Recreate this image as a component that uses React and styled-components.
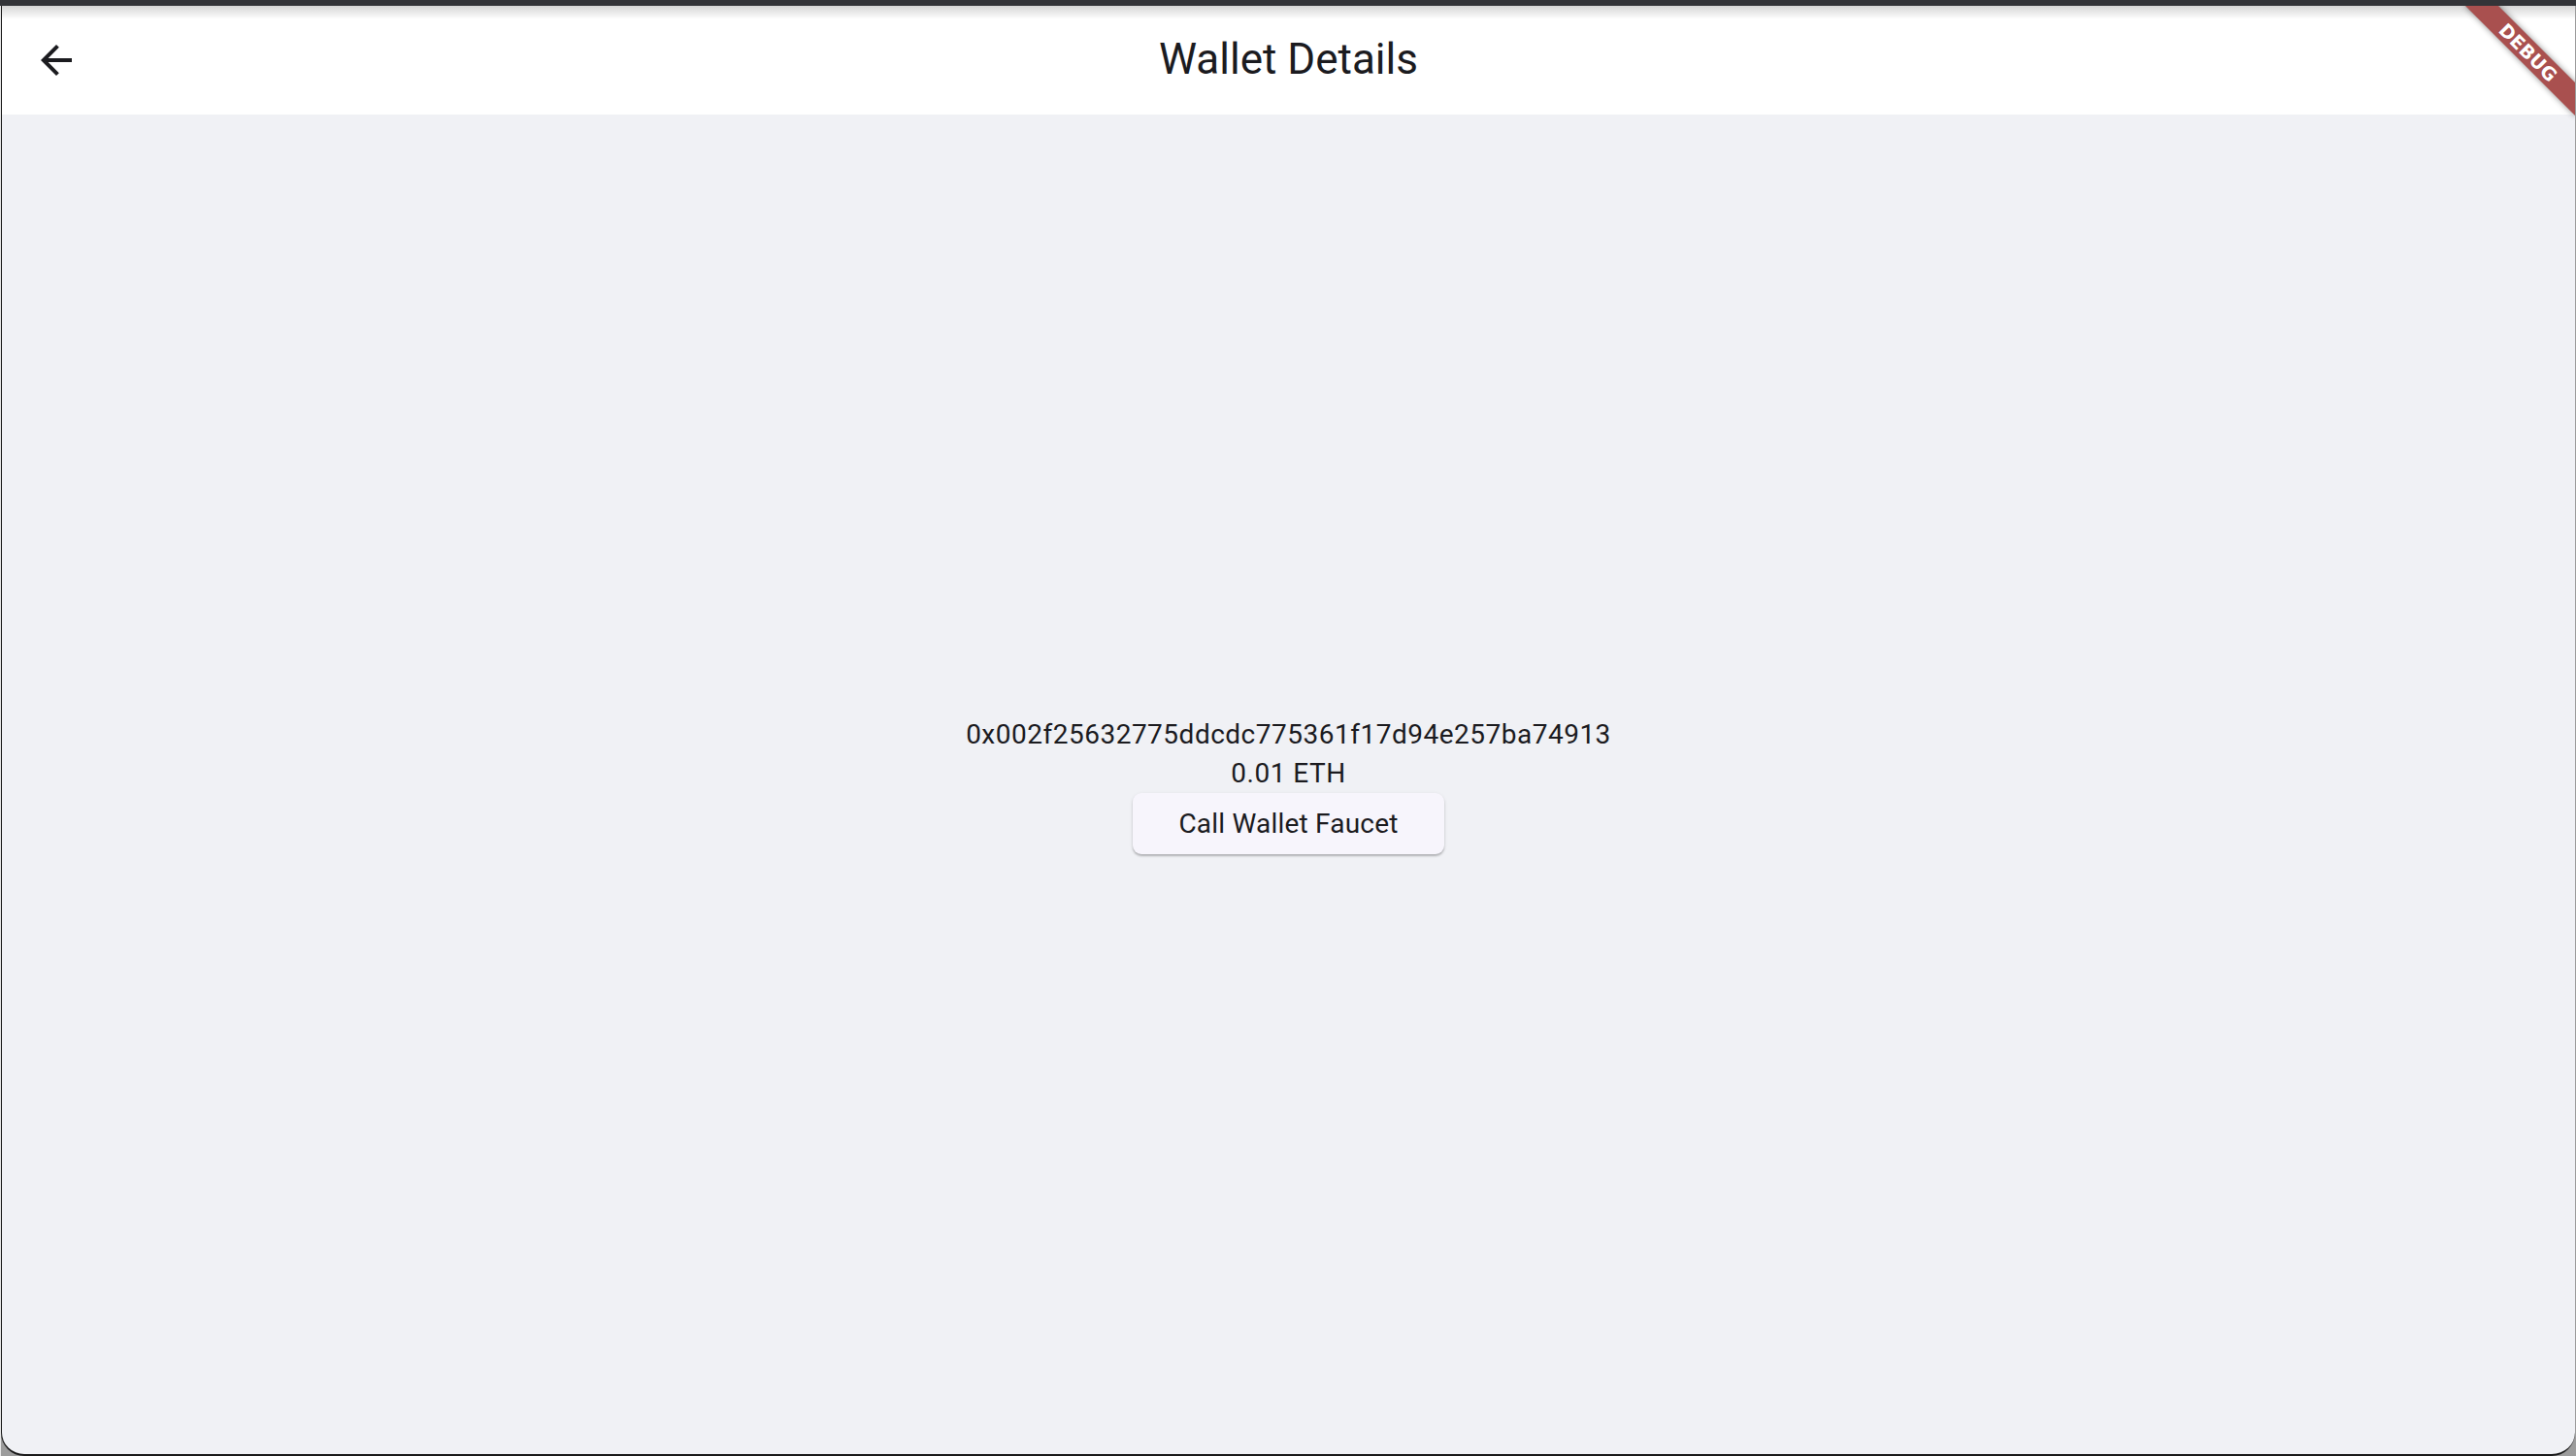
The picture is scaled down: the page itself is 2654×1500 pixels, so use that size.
import React from "react";
import styled, { createGlobalStyle } from "styled-components";

const GlobalStyle = createGlobalStyle`
  html, body {
    margin: 0;
    padding: 0;
    background: #9c9c9c;
  }
  body {
    font-family: Roboto, "Liberation Sans", Arial, sans-serif;
    color: #1b1b1f;
  }
  * { box-sizing: border-box; }
`;

const Frame = styled.div`
  width: 2654px;
  height: 1500px;
  display: flex;
  flex-direction: column;
  background: linear-gradient(90deg, #e6e6e6 0px, #e6e6e6 1px, #9c9c9c 1px);
  overflow: hidden;
`;

const TitleStrip = styled.div`
  height: 6px;
  flex: none;
  background: #333438;
`;

const Window = styled.div`
  position: relative;
  flex: 1;
  display: flex;
  flex-direction: column;
  margin-left: 1px;
  margin-right: 1px;
  border-left: 1px solid #1a1a1a;
  border-bottom: 2px solid #1a1a1a;
  border-bottom-left-radius: 24px;
  border-bottom-right-radius: 24px;
  background: #f0f1f5;
  overflow: hidden;
`;

const AppBar = styled.header`
  position: relative;
  height: 112px;
  flex: none;
  display: flex;
  align-items: center;
  padding-left: 32px;
  background: #ffffff;
  &::before {
    content: "";
    position: absolute;
    left: 0;
    right: 0;
    top: 0;
    height: 14px;
    background: linear-gradient(180deg, rgba(0, 0, 0, 0.16), rgba(0, 0, 0, 0));
    pointer-events: none;
  }
`;

const IconButton = styled.button`
  width: 48px;
  height: 48px;
  padding: 0;
  border: none;
  background: transparent;
  display: flex;
  align-items: center;
  justify-content: center;
  cursor: pointer;
`;

const Title = styled.h1`
  position: absolute;
  left: 0;
  right: 0;
  top: 0;
  bottom: 0;
  margin: 0;
  display: flex;
  align-items: center;
  justify-content: center;
  padding-bottom: 2px;
  font-family: Roboto, "Liberation Sans", sans-serif;
  font-weight: 400;
  font-size: 44px;
  color: #1b1b1f;
  pointer-events: none;
`;

const Body = styled.main`
  flex: 1;
  display: flex;
  flex-direction: column;
  align-items: center;
  justify-content: center;
`;

const Line = styled.div`
  height: 40px;
  display: flex;
  align-items: center;
  font-family: Roboto, "Liberation Sans", sans-serif;
  font-size: 28px;
  letter-spacing: 0.5px;
  color: #1b1b1f;
`;

const FaucetButton = styled.button`
  width: 321px;
  height: 63px;
  border: none;
  border-radius: 9px;
  background: #f7f5fc;
  box-shadow: 0 2px 2px rgba(0, 0, 0, 0.22), 0 1px 4px rgba(0, 0, 0, 0.08);
  font-family: Roboto, "Liberation Sans", sans-serif;
  font-size: 28px;
  letter-spacing: 0.2px;
  color: #1b1b1f;
  cursor: pointer;
`;

const BannerClip = styled.div`
  position: absolute;
  top: 0;
  right: 0;
  width: 130px;
  height: 130px;
  overflow: hidden;
  pointer-events: none;
`;

const BannerBand = styled.div`
  position: absolute;
  left: ${(p) => p.$cx - 80}px;
  top: ${(p) => p.$cy - 12}px;
  width: 160px;
  height: 24px;
  transform: rotate(45deg);
  background: #a9504f;
  box-shadow: 0 0 6px rgba(0, 0, 0, 0.45);
  display: flex;
  align-items: center;
  justify-content: center;
  color: #ffffff;
  font-family: "DejaVu Sans", "Liberation Sans", sans-serif;
  font-weight: 700;
  font-size: 19px;
  letter-spacing: 0.3px;
`;

function BackArrow() {
  return (
    <svg width="48" height="48" viewBox="0 0 24 24" aria-hidden="true">
      <path
        d="M20 11H7.83l5.59-5.59L12 4l-8 8 8 8 1.41-1.41L7.83 13H20v-2z"
        fill="#1b1b1f"
      />
    </svg>
  );
}

export default function App() {
  return (
    <>
      <GlobalStyle />
      <Frame>
        <TitleStrip />
        <Window>
          <AppBar>
            <IconButton aria-label="Back">
              <BackArrow />
            </IconButton>
            <Title>Wallet Details</Title>
          </AppBar>
          <Body>
            <Line>0x002f25632775ddcdc775361f17d94e257ba74913</Line>
            <Line>0.01 ETH</Line>
            <FaucetButton>Call Wallet Faucet</FaucetButton>
          </Body>
          <BannerClip>
            <BannerBand $cx={130 - 48} $cy={48}>DEBUG</BannerBand>
          </BannerClip>
        </Window>
      </Frame>
    </>
  );
}
